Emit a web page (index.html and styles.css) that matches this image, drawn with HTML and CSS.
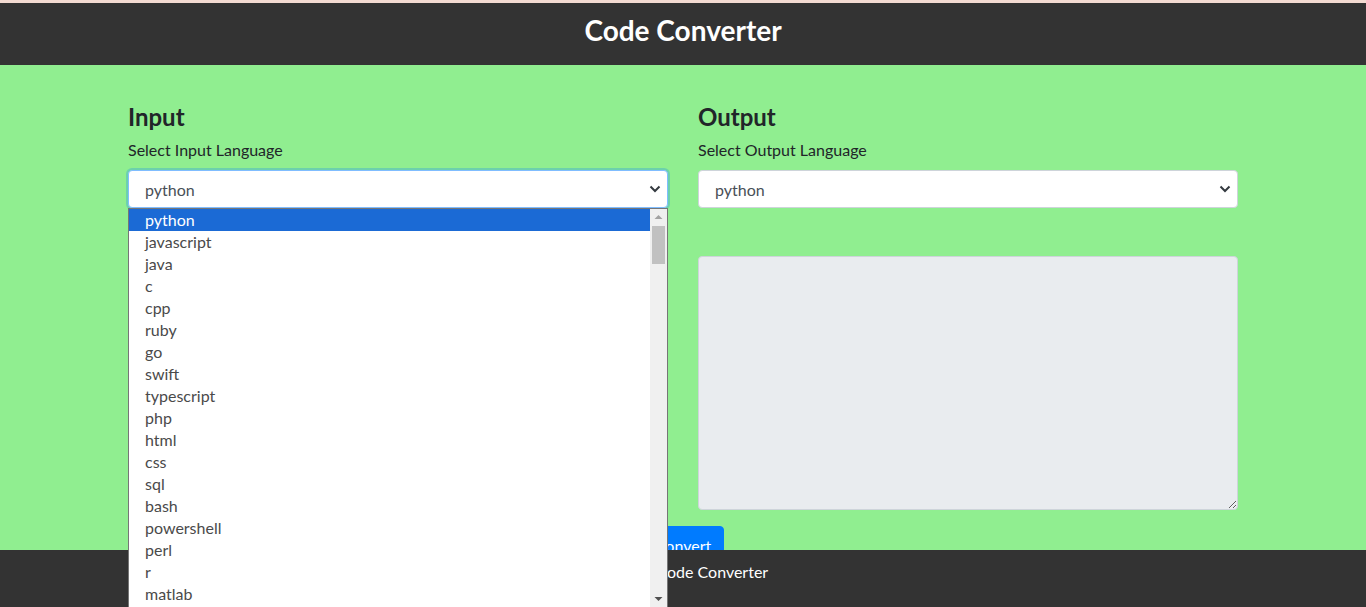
FILE: index.html
```html
<!DOCTYPE html>
<html lang="en">
<head>
<meta charset="utf-8">
<title>Code Converter</title>
<link rel="stylesheet" href="styles.css">
</head>
<body>
<div class="topstrip"></div>
<header class="site-header">
  <h1 class="site-title">Code Converter</h1>
</header>
<main class="main">
  <div class="container">
    <div class="row">
      <section class="col">
        <h4 class="col-title">Input</h4>
        <div class="form-group">
          <label class="label">Select Input Language</label>
          <div class="select-wrap">
            <div class="select select-focus">
              <span class="select-value">python</span>
              <svg class="chev" width="12" height="8" viewBox="0 0 12 8"><path d="M1.5 1.5 L6 6 L10.5 1.5" fill="none" stroke="#343a40" stroke-width="2"/></svg>
            </div>
            <div class="dropdown">
              <ul class="options">
                <li class="opt opt-active">python</li>
                <li class="opt">javascript</li>
                <li class="opt">java</li>
                <li class="opt">c</li>
                <li class="opt">cpp</li>
                <li class="opt">ruby</li>
                <li class="opt">go</li>
                <li class="opt">swift</li>
                <li class="opt">typescript</li>
                <li class="opt">php</li>
                <li class="opt">html</li>
                <li class="opt">css</li>
                <li class="opt">sql</li>
                <li class="opt">bash</li>
                <li class="opt">powershell</li>
                <li class="opt">perl</li>
                <li class="opt">r</li>
                <li class="opt">matlab</li>
              </ul>
              <div class="scrollbar">
                <svg class="sb-arrow" width="17" height="17" viewBox="0 0 17 17"><path d="M4.5 10 L8.5 6 L12.5 10 Z" fill="#a3a3a3"/></svg>
                <div class="sb-track"><div class="sb-thumb"></div></div>
                <svg class="sb-arrow" width="17" height="17" viewBox="0 0 17 17"><path d="M4.5 7 L8.5 11 L12.5 7 Z" fill="#505050"/></svg>
              </div>
            </div>
          </div>
        </div>
        <textarea class="code" readonly></textarea>
      </section>
      <section class="col">
        <h4 class="col-title">Output</h4>
        <div class="form-group">
          <label class="label">Select Output Language</label>
          <div class="select">
            <span class="select-value">python</span>
            <svg class="chev" width="12" height="8" viewBox="0 0 12 8"><path d="M1.5 1.5 L6 6 L10.5 1.5" fill="none" stroke="#343a40" stroke-width="2"/></svg>
          </div>
        </div>
        <textarea class="code" readonly></textarea>
      </section>
    </div>
    <div class="actions">
      <button class="btn">Convert</button>
    </div>
  </div>
</main>
<footer class="site-footer">
  <p class="footer-text">© 2023 Code Converter</p>
</footer>
</body>
</html>
```

FILE: styles.css
```css
* { box-sizing: border-box; }
html, body { height: 100%; }
body {
  margin: 0;
  font-family: "Lato", "Noto Sans", sans-serif;
  font-size: 16px;
  color: #212529;
  background: #90ee90;
  overflow: hidden;
}
.topstrip { height: 3px; background: #f3dbd2; }
.site-header {
  height: 62px;
  background: #333333;
  display: flex;
  align-items: center;
  justify-content: center;
}
.site-title {
  margin: 0;
  color: #ffffff;
  font-size: 28px;
  font-weight: 700;
  line-height: 1;
  padding-bottom: 8px;
}
.main {
  background: #90ee90;
  padding-top: 38px;
}
.container {
  width: 1110px;
  margin: 0 auto;
}
.row {
  display: flex;
  gap: 30px;
}
.col { width: 540px; }
.col-title {
  margin: 0 0 7px;
  font-size: 24px;
  font-weight: 700;
  line-height: 28px;
}
.form-group { margin-bottom: 48px; }
.label {
  display: block;
  margin-bottom: 8px;
  line-height: 24px;
}
.select-wrap { position: relative; }
.select {
  height: 38px;
  background: #ffffff;
  border: 1px solid #ced4da;
  border-radius: 4px;
  display: flex;
  align-items: center;
  justify-content: space-between;
  padding: 0 6px 0 16px;
  color: #495057;
}
.select-focus {
  border-color: #80bdff;
  box-shadow: 0 0 0 2px rgba(0, 123, 255, 0.25);
}
.chev { display: block; }
.dropdown {
  position: absolute;
  left: 0;
  top: 38px;
  width: 540px;
  height: 400px;
  background: #ffffff;
  border: 1px solid #767676;
  display: flex;
  z-index: 10;
}
.options {
  list-style: none;
  margin: 0;
  padding: 0;
  flex: 1;
}
.opt {
  height: 22px;
  line-height: 22px;
  padding-left: 16px;
  color: #4a4a4a;
}
.opt-active {
  background: #1b6ad5;
  color: #ffffff;
}
.scrollbar {
  width: 17px;
  background: #f0f0f0;
  display: flex;
  flex-direction: column;
}
.sb-arrow { display: block; flex: none; }
.sb-track { flex: 1; padding: 0 2px; }
.sb-thumb {
  height: 38px;
  background: #c1c1c1;
}
.code {
  display: block;
  width: 540px;
  height: 254px;
  background: #e9ecef;
  border: 1px solid #ced4da;
  border-radius: 4px;
  resize: vertical;
  margin: 0;
}
.actions {
  display: flex;
  justify-content: center;
  padding-top: 16px;
}
.btn {
  font-family: inherit;
  font-size: 16px;
  height: 38px;
  padding: 0 12px;
  background: #007bff;
  color: #ffffff;
  border: 1px solid #007bff;
  border-radius: 4px;
}
.site-footer {
  position: fixed;
  left: 0;
  right: 0;
  bottom: 0;
  height: 57px;
  background: #333333;
  display: flex;
  align-items: center;
  justify-content: center;
  z-index: 5;
}
.footer-text {
  margin: 0;
  color: #ffffff;
  padding-bottom: 15px;
}
```
